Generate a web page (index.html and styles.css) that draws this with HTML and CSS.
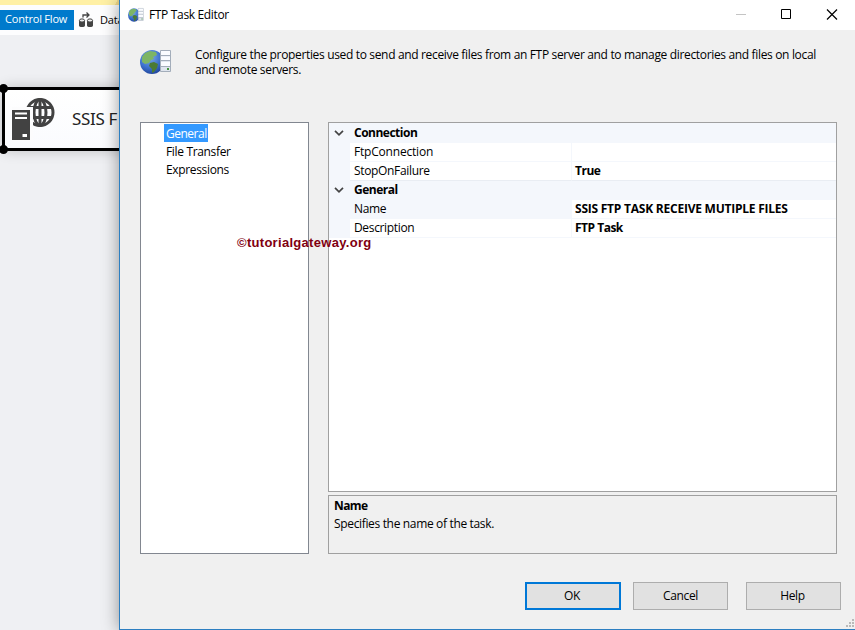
FILE: index.html
```html
<!DOCTYPE html>
<html lang="en">
<head>
    <meta charset="UTF-8">
    <title>FTP Task Editor</title>
    <link rel="stylesheet" href="styles.css">
</head>
<body>
    <div class="designer">
        <div class="notice"></div>
        <div class="tabs">
            <div class="tab active">Control Flow</div>
            <div class="tab">
                <svg width="16" height="16" viewBox="0 0 16 16">
                    <path d="M1 8.500v5c0 2 6 2 6 0v-5zM9 8.500v5c0 2 6 2 6 0v-5z" fill="#444"/>
                    <ellipse cx="4" cy="8.500" rx="2.600" ry="1.600" fill="#eee" stroke="#444"/>
                    <ellipse cx="12" cy="8.500" rx="2.600" ry="1.600" fill="#eee" stroke="#444"/>
                    <path d="M5 5.500V3h6M8.500 .5L11 3 8.500 5.500" fill="none" stroke="#444" stroke-width="1.300"/>
                </svg>
                <span>Data</span>
            </div>
        </div>
        <div class="canvas">
            <div class="task">
                <i class="dot dot-top"></i>
                <i class="dot dot-bottom"></i>
                <svg width="44" height="44" viewBox="0 0 44 44">
                    <g fill="none" stroke="#424242" stroke-width="3">
                        <circle cx="28" cy="15.500" r="13"/>
                        <ellipse cx="28" cy="15.500" rx="6" ry="13"/>
                        <path d="M28 2v27M16 10.500h24M16 20.500h24"/>
                    </g>
                    <path d="M-1 10h22v35H-1z" fill="#fcfcfd"/>
                    <path d="M0 13h18v30H0z" fill="#424242"/>
                    <path d="M3 16.500h12M3 21h12" stroke="#fff" stroke-width="2"/>
                    <path d="M10.500 37h4.500v3h-4.500z" fill="#fff"/>
                </svg>
                <span>SSIS F</span>
            </div>
        </div>
    </div>

    <div class="dialog">
        <div class="titlebar">
            <svg width="17" height="16" viewBox="0 0 34 28" preserveAspectRatio="none">
                <use href="#ftp-icon"/>
            </svg>
            <span class="title">FTP Task Editor</span>
            <div class="controls">
                <svg width="110" height="30" viewBox="0 0 110 30" fill="none">
                    <path d="M1 14.500h10" stroke="#c4c4c4"/>
                    <path d="M46.500 9.500h9v9h-9z" stroke="#000"/>
                    <path d="M92 9.500l10 10M102 9.500l-10 10" stroke="#000" stroke-width="1.200"/>
                </svg>
            </div>
        </div>

        <div class="header">
            <svg width="34" height="28" viewBox="0 0 34 28">
                <defs>
                    <radialGradient id="sea" cx=".4" cy=".3" r=".7">
                        <stop offset="0" stop-color="#83aeea"/>
                        <stop offset=".6" stop-color="#3f74cf"/>
                        <stop offset="1" stop-color="#2349a0"/>
                    </radialGradient>
                </defs>
                <g id="ftp-icon">
                    <circle cx="12" cy="14" r="12" fill="url(#sea)"/>
                    <path d="M2 9l3-4 5-2 6 1 1 3-4 2 1 2-3 1-2 3-4 1-3-2z" fill="#7db565"/>
                    <path d="M10 15l4-1 4 2-1 4-3 4-2 1v-4l-3-3z" fill="#4b7a35"/>
                    <path d="M20.500 2.500h10v21h-10z" fill="#dfe5ee" stroke="#a3adba"/>
                    <path d="M21 3h9v4h-9zM21 8.500h9v4h-9zM21 14h9v4h-9z" fill="#fafcff"/>
                    <path d="M21 7.500h9M21 12.500h9M21 18.500h9" stroke="#a3adba"/>
                    <path d="M27 20h2v2h-2z" fill="#45953d"/>
                </g>
            </svg>
            <p>Configure the properties used to send and receive files from an FTP server and to manage directories and files on local<br>and remote servers.</p>
        </div>

        <div class="main">
            <ul class="tree">
                <li class="selected">General</li>
                <li>File Transfer</li>
                <li>Expressions</li>
            </ul>
            <div class="properties">
                <div class="grid">
                    <div class="row category">
                        <svg width="10" height="6" viewBox="0 0 10 6"><path d="M1 .8l4 4 4-4"/></svg>
                        <b>Connection</b>
                    </div>
                    <div class="row">
                        <div class="key wide">FtpConnection</div>
                        <div class="value"></div>
                    </div>
                    <div class="row last">
                        <div class="key">StopOnFailure</div>
                        <div class="value">True</div>
                    </div>
                    <div class="row category second">
                        <svg width="10" height="6" viewBox="0 0 10 6"><path d="M1 .8l4 4 4-4"/></svg>
                        <b>General</b>
                    </div>
                    <div class="row current">
                        <div class="key">Name</div>
                        <div class="value">SSIS FTP TASK RECEIVE MUTIPLE FILES</div>
                    </div>
                    <div class="row">
                        <div class="key">Description</div>
                        <div class="value">FTP Task</div>
                    </div>
                </div>
                <div class="help">
                    <b>Name</b>
                    <span>Specifies the name of the task.</span>
                </div>
            </div>
        </div>

        <div class="buttons">
            <button class="default">OK</button>
            <button>Cancel</button>
            <button class="far">Help</button>
        </div>

        <svg class="grip" width="8" height="8" viewBox="0 0 8 8">
            <path d="M6 0h2v2H6zM3 3h2v2H3zM6 3h2v2H6zM0 6h2v2H0zM3 6h2v2H3zM6 6h2v2H6z" fill="#b9b9b9"/>
        </svg>
    </div>

    <div class="watermark">©tutorialgateway.org</div>
</body>
</html>
```
FILE: styles.css
```css
* {
    box-sizing: border-box;
}
body {
    margin: 0;
    width: 855px;
    height: 630px;
    position: relative;
    overflow: hidden;
    font: 12px/18px "Open Sans", "Noto Sans", sans-serif;
    letter-spacing: -0.34px;
    color: #000;
    background: #eff0f3;
}
svg {
    display: block;
    flex: none;
}
span, b {
    white-space: nowrap;
}

/* designer behind the dialog */
.designer {
    width: 120px;
    height: 630px;
    overflow: hidden;
}
.notice {
    height: 5px;
    background: linear-gradient(115deg, #fff0a5 96%, #f5dc8c 96%);
}
.tabs {
    display: flex;
    height: 30px;
    padding-top: 5px;
    background: #fdfdfe;
}
.tab {
    display: flex;
    align-items: center;
    gap: 6px;
    height: 20px;
    padding-left: 4px;
    flex: none;
    font-size: 11px;
    letter-spacing: -0.2px;
}
.tab.active {
    width: 74px;
    padding: 0 0 2px 5px;
    color: #fff;
    background: #007acc;
}
.canvas {
    height: 595px;
    padding-top: 52px;
}
.task {
    position: relative;
    display: flex;
    align-items: center;
    gap: 16px;
    width: 240px;
    height: 64px;
    margin-left: 2px;
    padding-left: 7px;
    border: 3px solid #000;
    border-radius: 6px;
    background: linear-gradient(#fff, #fafbfe);
    box-shadow: 0 0 14px rgba(0, 0, 0, 0.2);
    font: 17px/24px "Noto Sans", sans-serif;
    color: #222;
}
.dot {
    position: absolute;
    left: -6px;
    width: 9px;
    height: 9px;
    border-radius: 50%;
    background: #000;
}
.dot-top {
    top: -6px;
}
.dot-bottom {
    bottom: -6px;
}

/* dialog window */
.dialog {
    position: absolute;
    left: 119px;
    top: 0;
    width: 736px;
    height: 630px;
    border-left: 1px solid #2d7fc1;
    border-bottom: 1px solid #2d7fc1;
    background: #f0f0f0;
    box-shadow: 0 0 16px rgba(0, 0, 0, 0.4);
}
.titlebar {
    display: flex;
    align-items: center;
    gap: 4px;
    height: 30px;
    padding-left: 8px;
    background: #fff;
}
.controls {
    margin-left: auto;
    padding-right: 10px;
}
.header {
    display: flex;
    height: 92px;
    padding: 18px 0 0 20px;
    gap: 21px;
}
.header p {
    margin: -1px 0 0;
    line-height: 15px;
    white-space: nowrap;
}
.main {
    display: flex;
    gap: 19px;
    height: 432px;
    padding-left: 20px;
}
.tree {
    width: 169px;
    margin: 0;
    padding: 1px 0 0 23px;
    list-style: none;
    border: 1px solid #828790;
    background: #fff;
}
.tree li {
    width: max-content;
    height: 18px;
    padding: 0 2px;
    line-height: 19px;
}
.tree .selected {
    width: 44px;
    letter-spacing: -0.5px;
    color: #fff;
    background: #3399ff;
}
.properties {
    display: flex;
    flex-direction: column;
    gap: 3px;
    width: 509px;
}
.grid {
    height: 370px;
    border: 1px solid #a0a0a0;
    background: #fff;
}
.row {
    display: flex;
    height: 19px;
    padding-left: 21px;
    background: #f4f7fc;
}
.category {
    align-items: center;
    gap: 10px;
    height: 20px;
    padding-left: 5px;
}
.category b {
    letter-spacing: -0.5px;
}
.category.second {
    padding-bottom: 2px;
    height: 19px;
}
.category path {
    fill: none;
    stroke: #444;
    stroke-width: 1.7;
}
.key {
    width: 222px;
    padding-left: 4px;
    border-right: 1px solid #f4f7fc;
    border-bottom: 1px solid #f4f7fc;
    background: #fff;
}
.key.wide {
    letter-spacing: -0.2px;
}
.value {
    flex: 1;
    padding-left: 3px;
    border-bottom: 1px solid #f4f7fc;
    background: #fff;
    font-weight: bold;
    letter-spacing: -0.5px;
}
.last .key, .last .value {
    border-bottom-color: #e9edf3;
}
.current .key {
    background: #f4f7fc;
}
.current .value {
    letter-spacing: -0.23px;
}
.help {
    display: flex;
    flex-direction: column;
    height: 59px;
    padding: 1px 5px;
    border: 1px solid #a0a0a0;
}
.help b {
    letter-spacing: -0.6px;
}
.buttons {
    display: flex;
    justify-content: flex-end;
    gap: 12px;
    padding: 28px 14px 0 0;
}
button {
    width: 95px;
    height: 28px;
    padding: 0;
    border: 1px solid #adadad;
    background: #e1e1e1;
    color: #000;
    font: inherit;
    letter-spacing: inherit;
}
button.default {
    width: 96px;
    padding-right: 2px;
    border: 2px solid #0078d7;
}
button.far {
    margin-left: 6px;
    padding-right: 2px;
}
.grip {
    position: absolute;
    right: 1px;
    bottom: 2px;
}
.watermark {
    position: absolute;
    left: 237px;
    top: 235px;
    font: bold 13px/16px "Liberation Sans", Arial, sans-serif;
    letter-spacing: 0.3px;
    color: #800010;
}
```
